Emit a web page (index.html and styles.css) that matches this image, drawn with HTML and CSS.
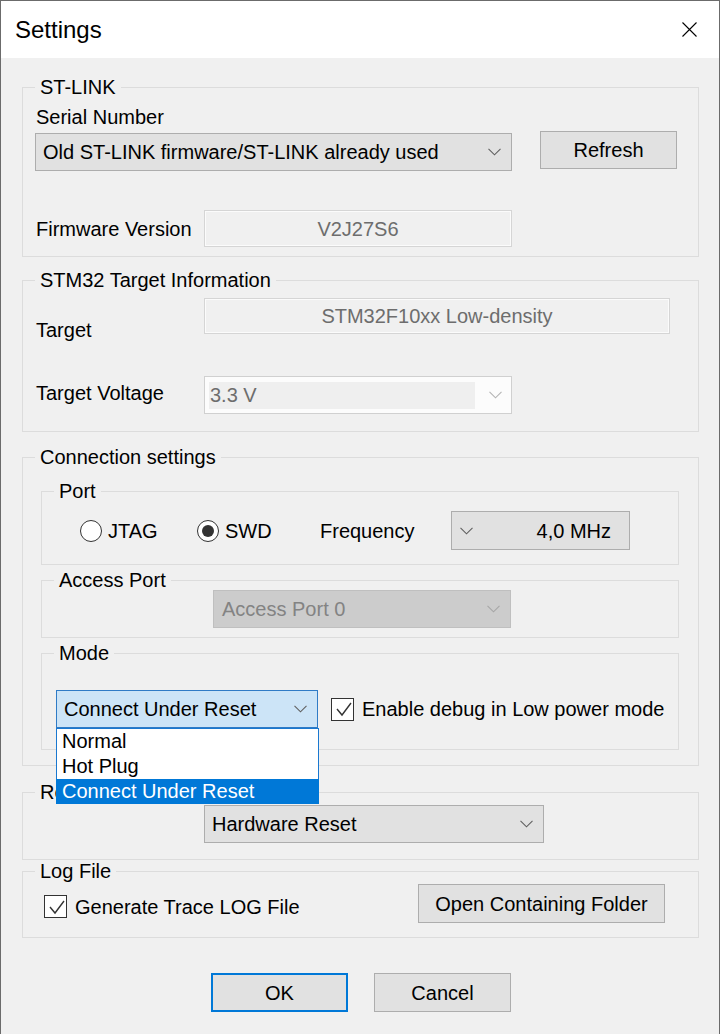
FILE: index.html
```html
<!DOCTYPE html>
<html lang="en">
<head>
<meta charset="utf-8">
<title>Settings</title>
<link rel="stylesheet" href="styles.css">
</head>
<body>
<div class="window">
  <div class="titlebar">
    <span class="title">Settings</span>
    <svg class="close" width="15" height="15" viewBox="0 0 15 15"><path d="M0.5 0.5 L14.5 14.5 M14.5 0.5 L0.5 14.5" stroke="#000" stroke-width="1.1" fill="none"/></svg>
  </div>
  <div class="body">
    <fieldset class="group g-stlink">
      <legend>ST-LINK</legend>
      <div class="lbl l-serial">Serial Number</div>
      <div class="row r-serial">
        <div class="combo c-serial"><span class="ctext">Old ST-LINK firmware/ST-LINK already used</span><svg class="chev" width="13" height="8" viewBox="0 0 13 8"><polyline points="0.5,0.8 6.5,6.8 12.5,0.8" fill="none" stroke="#606060" stroke-width="1.1"/></svg></div>
        <div class="btn b-refresh">Refresh</div>
      </div>
      <div class="row r-fw">
        <span class="lbl w-lbl">Firmware Version</span>
        <div class="field f-fw">V2J27S6</div>
      </div>
    </fieldset>

    <fieldset class="group g-target">
      <legend>STM32 Target Information</legend>
      <div class="row r-target">
        <span class="lbl w-lbl l-target">Target</span>
        <div class="field f-target">STM32F10xx Low-density</div>
      </div>
      <div class="row r-volt">
        <span class="lbl w-lbl">Target Voltage</span>
        <div class="combo-ro c-volt"><span class="ro-text">3.3 V</span><svg class="chev" width="13" height="8" viewBox="0 0 13 8"><polyline points="0.5,0.8 6.5,6.8 12.5,0.8" fill="none" stroke="#b4b4b4" stroke-width="1.1"/></svg></div>
      </div>
    </fieldset>

    <fieldset class="group g-conn">
      <legend>Connection settings</legend>
      <fieldset class="group sub g-port">
        <legend>Port</legend>
        <div class="row r-port">
          <span class="radio w-jtag"><span class="dot"></span>JTAG</span>
          <span class="radio on w-swd"><span class="dot"></span>SWD</span>
          <span class="lbl w-freq">Frequency</span>
          <div class="combo c-freq"><svg class="chev" width="13" height="8" viewBox="0 0 13 8"><polyline points="0.5,0.8 6.5,6.8 12.5,0.8" fill="none" stroke="#606060" stroke-width="1.1"/></svg><span class="ctext">4,0 MHz</span></div>
        </div>
      </fieldset>
      <fieldset class="group sub g-access">
        <legend>Access Port</legend>
        <div class="combo dis c-access"><span class="ctext">Access Port 0</span><svg class="chev" width="13" height="8" viewBox="0 0 13 8"><polyline points="0.5,0.8 6.5,6.8 12.5,0.8" fill="none" stroke="#a6a6a6" stroke-width="1.1"/></svg></div>
      </fieldset>
      <fieldset class="group sub g-mode">
        <legend>Mode</legend>
        <div class="row r-mode">
          <div class="combo-wrap">
            <div class="combo focus c-mode"><span class="ctext">Connect Under Reset</span><svg class="chev" width="13" height="8" viewBox="0 0 13 8"><polyline points="0.5,0.8 6.5,6.8 12.5,0.8" fill="none" stroke="#606060" stroke-width="1.1"/></svg></div>
            <ul class="droplist">
              <li>Normal</li>
              <li>Hot Plug</li>
              <li class="sel">Connect Under Reset</li>
            </ul>
          </div>
          <span class="check c-lowpower"><span class="box"><svg width="20" height="20" viewBox="0 0 20 20"><polyline points="4,10 9,16 18,4" fill="none" stroke="#333" stroke-width="1.4"/></svg></span>Enable debug in Low power mode</span>
        </div>
      </fieldset>
    </fieldset>

    <fieldset class="group g-reset">
      <legend>Reset Mode</legend>
      <div class="combo c-reset"><span class="ctext">Hardware Reset</span><svg class="chev" width="13" height="8" viewBox="0 0 13 8"><polyline points="0.5,0.8 6.5,6.8 12.5,0.8" fill="none" stroke="#606060" stroke-width="1.1"/></svg></div>
    </fieldset>

    <fieldset class="group g-log">
      <legend>Log File</legend>
      <div class="row r-log">
        <span class="check c-trace"><span class="box"><svg width="20" height="20" viewBox="0 0 20 20"><polyline points="4,10 9,16 18,4" fill="none" stroke="#333" stroke-width="1.4"/></svg></span>Generate Trace LOG File</span>
        <div class="btn b-folder">Open Containing Folder</div>
      </div>
    </fieldset>

    <div class="actions">
      <div class="btn b-ok">OK</div>
      <div class="btn b-cancel">Cancel</div>
    </div>
  </div>
</div>
</body>
</html>
```

FILE: styles.css
```css
* { box-sizing: border-box; }
html, body { margin: 0; padding: 0; }
body {
  font-family: "Liberation Sans", Arial, sans-serif;
  font-size: 20px;
  line-height: 22px;
  color: #000;
  background: #f0f0f0;
}
.window {
  width: 720px;
  height: 1034px;
  border: 1px solid #6b6b6b;
  border-bottom: none;
  background: #f0f0f0;
  display: flex;
  flex-direction: column;
  overflow: hidden;
}
.titlebar {
  height: 57px;
  flex: none;
  background: #fff;
  display: flex;
  align-items: center;
  padding: 0 22px 0 14px;
}
.title { font-size: 24px; line-height: 28px; }
.close { margin-left: auto; display: block; }

.body { padding: 18px 20px 0 21px; }

fieldset.group {
  margin: 0;
  padding: 0;
  border: 1px solid #dcdcdc;
  min-width: 0;
}
fieldset.group > legend {
  margin-left: 12px;
  padding: 0 5px;
  line-height: 22px;
}
.g-stlink { height: 181px; padding-left: 12px !important; }
.g-stlink > legend { margin-left: 0 !important; }
.g-target { height: 163px; margin-top: 12px !important; padding-left: 13px !important; }
.g-target > legend { margin-left: -1px !important; }
.g-conn { height: 320px; margin-top: 14px !important; }
.g-reset { height: 79px; margin-top: 15px !important; }
.g-log { height: 78px; }

.row { display: flex; align-items: center; }
.lbl { white-space: nowrap; }
.w-lbl { width: 168px; flex: none; }

.l-serial { margin-top: 8px; padding-left: 1px; }
.r-serial { margin-top: 5px; align-items: flex-start; }
.r-fw { margin-top: 39px; }
.r-fw .w-lbl { padding-left: 1px; width: 169px; }

.combo {
  display: flex;
  align-items: center;
  background: #e1e1e1;
  border: 1px solid #adadad;
  height: 38px;
  padding: 0 10px 0 7px;
  white-space: nowrap;
}
.combo .ctext { flex: 1; }
.chev { display: block; flex: none; }

.c-serial { width: 477px; }
.btn {
  display: flex;
  align-items: center;
  justify-content: center;
  background: #e1e1e1;
  border: 1px solid #adadad;
  height: 38px;
  white-space: nowrap;
}
.b-refresh { width: 137px; margin-left: 28px; margin-top: -2px; }

.field {
  border: 1px solid #d5d5d5;
  box-shadow: inset 0 0 0 1px #fbfbfb;
  background: #f0f0f0;
  color: #6d6d6d;
  display: flex;
  align-items: center;
  justify-content: center;
}
.f-fw { width: 308px; height: 37px; }

.r-target { margin-top: 7px; align-items: flex-start; }
.l-target { margin-top: 21px; }
.f-target { width: 466px; height: 36px; }
.r-volt { margin-top: 35px; }
.r-volt .w-lbl { margin-top: -4px; }

.combo-ro {
  width: 308px;
  height: 38px;
  background: #fcfcfc;
  border: 1px solid #d0d0d0;
  display: flex;
  align-items: center;
  padding: 0 9px 0 4px;
}
.ro-text {
  width: 266px;
  height: 27px;
  background: #efefef;
  color: #6d6d6d;
  display: flex;
  align-items: center;
  padding-left: 1px;
  margin-right: auto;
}

/* connection */
.sub { margin-left: 18px !important; width: 638px; }
.g-port { height: 85px; margin-top: 12px !important; }
.g-access { height: 69px; margin-top: 4px !important; }
.g-mode { height: 108px; margin-top: 4px !important; }

.r-port { margin-top: 9px; padding-left: 38px; }
.radio { display: flex; align-items: center; white-space: nowrap; }
.radio .dot {
  width: 22px;
  height: 22px;
  border-radius: 50%;
  border: 1px solid #333;
  background: #fff;
  margin-right: 6px;
  display: flex;
  align-items: center;
  justify-content: center;
  flex: none;
}
.radio.on .dot::after {
  content: "";
  width: 12px;
  height: 12px;
  border-radius: 50%;
  background: #333;
}
.w-jtag { width: 117px; }
.w-swd { width: 123px; }
.w-freq { width: 131px; }
.c-freq { width: 179px; height: 39px; padding: 0 18px 0 8px; }
.c-freq .ctext { text-align: right; }

.c-access {
  width: 298px;
  margin-left: 171px;
  margin-top: -1px;
  padding-left: 8px;
}
.combo.dis { background: #cccccc; border-color: #bfbfbf; color: #838383; }

.r-mode { margin-top: 26px; padding-left: 14px; align-items: center; }
.combo-wrap { position: relative; }
.c-mode { width: 262px; }
.combo.focus { background: #cce4f7; border-color: #2f7bc6; }
.droplist {
  position: absolute;
  top: 100%;
  left: 0;
  width: 263px;
  margin: 0;
  padding: 0;
  list-style: none;
  background: #fff;
  border: 1px solid #1a78d0;
  z-index: 5;
}
.droplist li { height: 25px; line-height: 25px; padding-left: 5px; white-space: nowrap; }
.droplist li.sel { background: #0078d7; color: #fff; margin: 0 -1px -1px; padding-left: 6px; height: 25px; }

.check { display: flex; align-items: center; white-space: nowrap; }
.check .box {
  width: 23px;
  height: 23px;
  border: 1px solid #333;
  background: #fff;
  display: flex;
  align-items: center;
  justify-content: center;
  flex: none;
}
.check .box svg { display: block; }
.c-lowpower { margin-left: 13px; }
.c-lowpower .box { margin-right: 8px; }

.c-reset { width: 340px; margin-left: 181px; margin-top: 2px; }

.r-log { margin-top: 2px; padding-left: 21px; align-items: flex-start; }
.c-trace { margin-top: 11px; }
.c-trace .box { margin-right: 8px; }
.b-folder { width: 247px; height: 39px; margin-left: auto; margin-right: 33px; }

.actions {
  margin-top: 35px;
  display: flex;
  justify-content: center;
  gap: 26px;
  padding-left: 1px;
}
.b-ok { width: 137px; height: 39px; border: 2px solid #0078d7; }
.b-cancel { width: 137px; height: 39px; }
```
